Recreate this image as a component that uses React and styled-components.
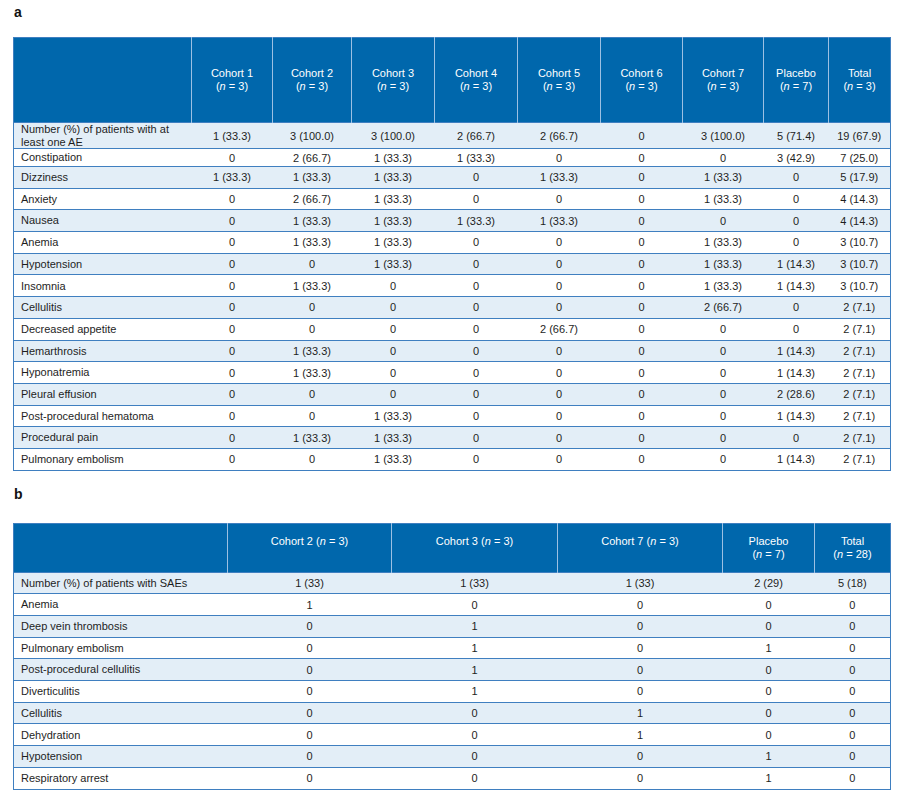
import React from 'react'
import styled, { createGlobalStyle } from 'styled-components'

const GlobalStyle = createGlobalStyle`
    body {
        margin: 0;
        background: #ffffff;
        font-family: "Liberation Sans", Arial, sans-serif;
    }
`

const Page = styled.div`
    width: 899px;
    padding: 0 9px 9px 13px;
    box-sizing: border-box;
`

const PanelLabel = styled.div`
    font-size: 14px;
    font-weight: bold;
    line-height: 16px;
    color: #111;
    padding-left: 1px;
    height: ${props => props.$height}px;
    box-sizing: border-box;
    padding-top: ${props => props.$top}px;
`

const Table = styled.table`
    width: 877px;
    table-layout: fixed;
    border-collapse: collapse;
    border: 1px solid #3f7fc0;
    font-size: 11px;
    color: #1e1e1e;
`

const HeadRow = styled.tr`
    height: ${props => props.$height}px;
    background: #0067ac;
`

const HeadCell = styled.th`
    font-weight: normal;
    color: #ffffff;
    line-height: 13px;
    text-align: center;
    vertical-align: ${props => props.$valign || 'middle'};
    padding: ${props => (props.$valign === 'top' ? '11px 4px 0' : '0 4px')};
    border-left: 1px solid #9cc0e3;
    &:first-child {
        border-left: none;
    }
`

const Row = styled.tr`
    height: ${props => props.$height}px;
    background: ${props => (props.$shaded ? '#e3eef7' : '#ffffff')};
    border-top: 1px solid #3f7fc0;
`

const LabelCell = styled.td`
    padding: 0 4px 0 7px;
    line-height: 12.5px;
    vertical-align: middle;
    white-space: normal;
`

const ValueCell = styled.td`
    text-align: center;
    vertical-align: middle;
    padding: 0;
    white-space: nowrap;
`

const Gap = styled.div`
    height: ${props => props.$height}px;
`

const headerA = ['Cohort 1', 'Cohort 2', 'Cohort 3', 'Cohort 4', 'Cohort 5', 'Cohort 6', 'Cohort 7', 'Placebo', 'Total']
const nA = ['3', '3', '3', '3', '3', '3', '3', '7', '3']
const widthsA = [178, 81, 79, 83, 83, 83, 82, 81, 65, 62]

const rowsA = [
    ['Number (%) of patients with at least one AE', '1 (33.3)', '3 (100.0)', '3 (100.0)', '2 (66.7)', '2 (66.7)', '0', '3 (100.0)', '5 (71.4)', '19 (67.9)'],
    ['Constipation', '0', '2 (66.7)', '1 (33.3)', '1 (33.3)', '0', '0', '0', '3 (42.9)', '7 (25.0)'],
    ['Dizziness', '1 (33.3)', '1 (33.3)', '1 (33.3)', '0', '1 (33.3)', '0', '1 (33.3)', '0', '5 (17.9)'],
    ['Anxiety', '0', '2 (66.7)', '1 (33.3)', '0', '0', '0', '1 (33.3)', '0', '4 (14.3)'],
    ['Nausea', '0', '1 (33.3)', '1 (33.3)', '1 (33.3)', '1 (33.3)', '0', '0', '0', '4 (14.3)'],
    ['Anemia', '0', '1 (33.3)', '1 (33.3)', '0', '0', '0', '1 (33.3)', '0', '3 (10.7)'],
    ['Hypotension', '0', '0', '1 (33.3)', '0', '0', '0', '1 (33.3)', '1 (14.3)', '3 (10.7)'],
    ['Insomnia', '0', '1 (33.3)', '0', '0', '0', '0', '1 (33.3)', '1 (14.3)', '3 (10.7)'],
    ['Cellulitis', '0', '0', '0', '0', '0', '0', '2 (66.7)', '0', '2 (7.1)'],
    ['Decreased appetite', '0', '0', '0', '0', '2 (66.7)', '0', '0', '0', '2 (7.1)'],
    ['Hemarthrosis', '0', '1 (33.3)', '0', '0', '0', '0', '0', '1 (14.3)', '2 (7.1)'],
    ['Hyponatremia', '0', '1 (33.3)', '0', '0', '0', '0', '0', '1 (14.3)', '2 (7.1)'],
    ['Pleural effusion', '0', '0', '0', '0', '0', '0', '0', '2 (28.6)', '2 (7.1)'],
    ['Post-procedural hematoma', '0', '0', '1 (33.3)', '0', '0', '0', '0', '1 (14.3)', '2 (7.1)'],
    ['Procedural pain', '0', '1 (33.3)', '1 (33.3)', '0', '0', '0', '0', '0', '2 (7.1)'],
    ['Pulmonary embolism', '0', '0', '1 (33.3)', '0', '0', '0', '0', '1 (14.3)', '2 (7.1)'],
]
const heightsA = [26, 18]

const headerB = [
    { name: 'Cohort 2', n: '3', wrap: false },
    { name: 'Cohort 3', n: '3', wrap: false },
    { name: 'Cohort 7', n: '3', wrap: false },
    { name: 'Placebo', n: '7', wrap: true },
    { name: 'Total', n: '28', wrap: true },
]
const widthsB = [214, 164, 166, 165, 92, 76]

const rowsB = [
    ['Number (%) of patients with SAEs', '1 (33)', '1 (33)', '1 (33)', '2 (29)', '5 (18)'],
    ['Anemia', '1', '0', '0', '0', '0'],
    ['Deep vein thrombosis', '0', '1', '0', '0', '0'],
    ['Pulmonary embolism', '0', '1', '0', '1', '0'],
    ['Post-procedural cellulitis', '0', '1', '0', '0', '0'],
    ['Diverticulitis', '0', '1', '0', '0', '0'],
    ['Cellulitis', '0', '0', '1', '0', '0'],
    ['Dehydration', '0', '0', '1', '0', '0'],
    ['Hypotension', '0', '0', '0', '1', '0'],
    ['Respiratory arrest', '0', '0', '0', '1', '0'],
]

const Colgroup = ({ widths }) => (
    <colgroup>
        {widths.map((w, i) => <col key={i} style={{ width: w }} />)}
    </colgroup>
)

const BodyRows = ({ rows, heights, base }) => (
    <tbody>
        {rows.map((row, i) => (
            <Row key={row[0]} $shaded={i % 2 === 0} $height={heights[i] || base}>
                <LabelCell>{row[0]}</LabelCell>
                {row.slice(1).map((v, j) => <ValueCell key={j}>{v}</ValueCell>)}
            </Row>
        ))}
    </tbody>
)

const App = () => {
    return (
        <Page>
            <GlobalStyle />
            <PanelLabel $height={37} $top={4}>a</PanelLabel>
            <Table>
                <Colgroup widths={widthsA} />
                <thead>
                    <HeadRow $height={85}>
                        <HeadCell />
                        {headerA.map((h, i) => (
                            <HeadCell key={h}>
                                {h}<br />(<i>n</i> = {nA[i]})
                            </HeadCell>
                        ))}
                    </HeadRow>
                </thead>
                <BodyRows rows={rowsA} heights={heightsA} base={21.7} />
            </Table>
            <Gap $height={12} />
            <PanelLabel $height={40} $top={3}>b</PanelLabel>
            <Table>
                <Colgroup widths={widthsB} />
                <thead>
                    <HeadRow $height={49}>
                        <HeadCell $valign="top" />
                        {headerB.map(h => (
                            <HeadCell key={h.name} $valign="top">
                                {h.name}{h.wrap ? <br /> : ' '}(<i>n</i> = {h.n})
                            </HeadCell>
                        ))}
                    </HeadRow>
                </thead>
                <BodyRows rows={rowsB} heights={[]} base={21.7} />
            </Table>
        </Page>
    )
}

export default App
